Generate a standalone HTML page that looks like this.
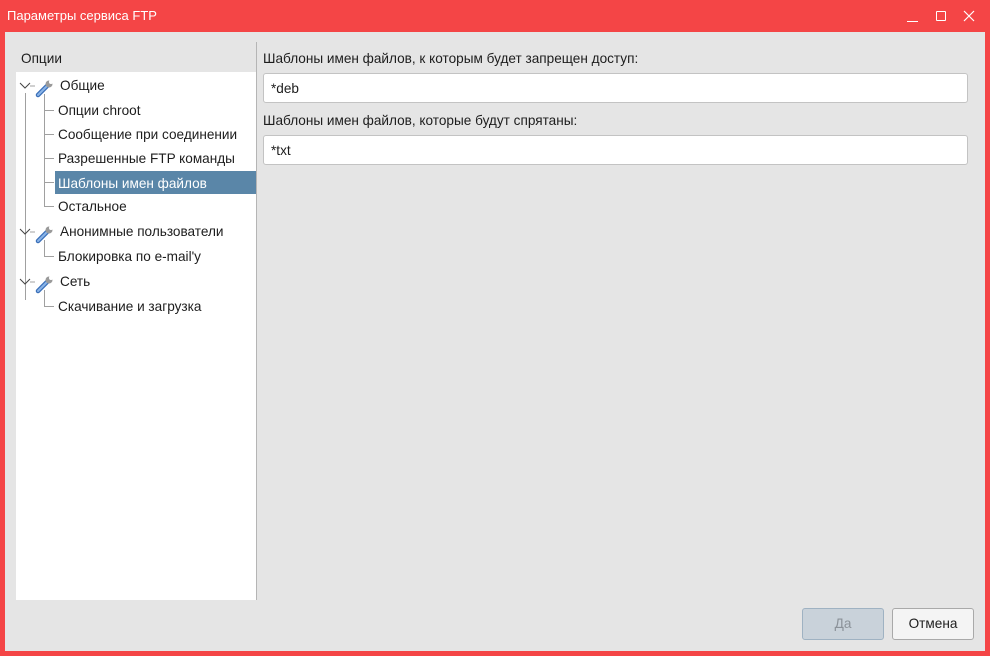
<!DOCTYPE html>
<html><head><meta charset="utf-8"><style>
body{margin:0;width:990px;height:656px;background:#f44546;font-family:"Liberation Sans","Noto Sans CJK SC",sans-serif;font-size:13.6px;color:#1d1d1d;position:relative;overflow:hidden}
.t{position:absolute;white-space:nowrap;line-height:16px;margin-top:1px}
#win{position:absolute;left:5px;top:32px;width:980px;height:619px;background:#e5e5e5}
#tree{position:absolute;left:16px;top:72px;width:240px;height:528px;background:#fff}
.ln{position:absolute;background:#a0a0a0}
.inp{position:absolute;left:263px;width:703px;height:28px;background:#fff;border:1px solid #c3c3c3;border-radius:3px}
.btn{position:absolute;top:608px;width:80px;height:30px;border:1px solid #a9a9a9;border-radius:3px;background:#f4f4f4;text-align:center;line-height:30px}
</style></head><body>
<div class="t" style="left:7px;top:8px;color:#fff;font-size:13px;margin-top:0">Параметры сервиса FTP</div>
<div style="position:absolute;left:907px;top:21px;width:11px;height:1px;background:#fff"></div>
<div style="position:absolute;left:936px;top:11px;width:8px;height:8px;border:1px solid #fff;border-radius:1px"></div>
<svg style="position:absolute;left:963px;top:10px" width="12" height="12"><path d="M1 1L11 11M11 1L1 11" stroke="#fff" stroke-width="1.2"/></svg>
<div id="win"></div>
<div class="t" style="left:21px;top:50px">Опции</div>
<div id="tree"></div>
<div style="position:absolute;left:256px;top:42px;width:1px;height:558px;background:#b5b5b5"></div>
<div style="position:absolute;left:55px;top:171px;width:201px;height:23px;background:#5a86a8"></div>
<div class="ln" style="left:25px;top:93px;width:1px;height:207px"></div>
<div class="ln" style="left:44px;top:94px;width:1px;height:112px"></div>
<div class="ln" style="left:44px;top:240px;width:1px;height:16px"></div>
<div class="ln" style="left:44px;top:290px;width:1px;height:16px"></div>
<div class="ln" style="left:44px;top:110px;width:10px;height:1px"></div>
<div class="ln" style="left:44px;top:134px;width:10px;height:1px"></div>
<div class="ln" style="left:44px;top:158px;width:10px;height:1px"></div>
<div class="ln" style="left:44px;top:182px;width:10px;height:1px"></div>
<div class="ln" style="left:44px;top:206px;width:10px;height:1px"></div>
<div class="ln" style="left:44px;top:256px;width:10px;height:1px"></div>
<div class="ln" style="left:44px;top:306px;width:10px;height:1px"></div>
<svg style="position:absolute;left:18px;top:80px" width="60" height="220">
<g id="g"><path d="M2 3l5 5 5-5" fill="none" stroke="#444" stroke-width="1"/><path d="M12 6h5" stroke="#a0a0a0"/>
<path d="M20 15l10-10" stroke="#3a6fb8" stroke-width="4.5" stroke-linecap="round"/><path d="M20 15l10-10" stroke="#8ab4e8" stroke-width="2" stroke-linecap="round"/>
<circle cx="31" cy="4" r="3.5" fill="#9a9a9a"/><circle cx="33" cy="2" r="2" fill="#fff"/></g>
<use href="#g" y="146"/><use href="#g" y="196"/>
</svg>
<div class="t" style="left:60px;top:77px">Общие</div>
<div class="t" style="left:58px;top:102px">Опции chroot</div>
<div class="t" style="left:58px;top:126px">Сообщение при соединении</div>
<div class="t" style="left:58px;top:150px">Разрешенные FTP команды</div>
<div class="t" style="left:58px;top:175px;color:#fff">Шаблоны имен файлов</div>
<div class="t" style="left:58px;top:198px">Остальное</div>
<div class="t" style="left:60px;top:223px">Анонимные пользователи</div>
<div class="t" style="left:58px;top:248px">Блокировка по e-mail'у</div>
<div class="t" style="left:60px;top:273px">Сеть</div>
<div class="t" style="left:58px;top:298px">Скачивание и загрузка</div>
<div class="t" style="left:263px;top:50px">Шаблоны имен файлов, к которым будет запрещен доступ:</div>
<div class="inp" style="top:73px"></div>
<div class="t" style="left:271px;top:80px">*deb</div>
<div class="t" style="left:263px;top:112px">Шаблоны имен файлов, которые будут спрятаны:</div>
<div class="inp" style="top:135px"></div>
<div class="t" style="left:271px;top:142px">*txt</div>
<div class="btn" style="left:802px;background:#c9d2da;border-color:#9fb2c2;color:#8b9299">Да</div>
<div class="btn" style="left:892px">Отмена</div>
</body></html>
